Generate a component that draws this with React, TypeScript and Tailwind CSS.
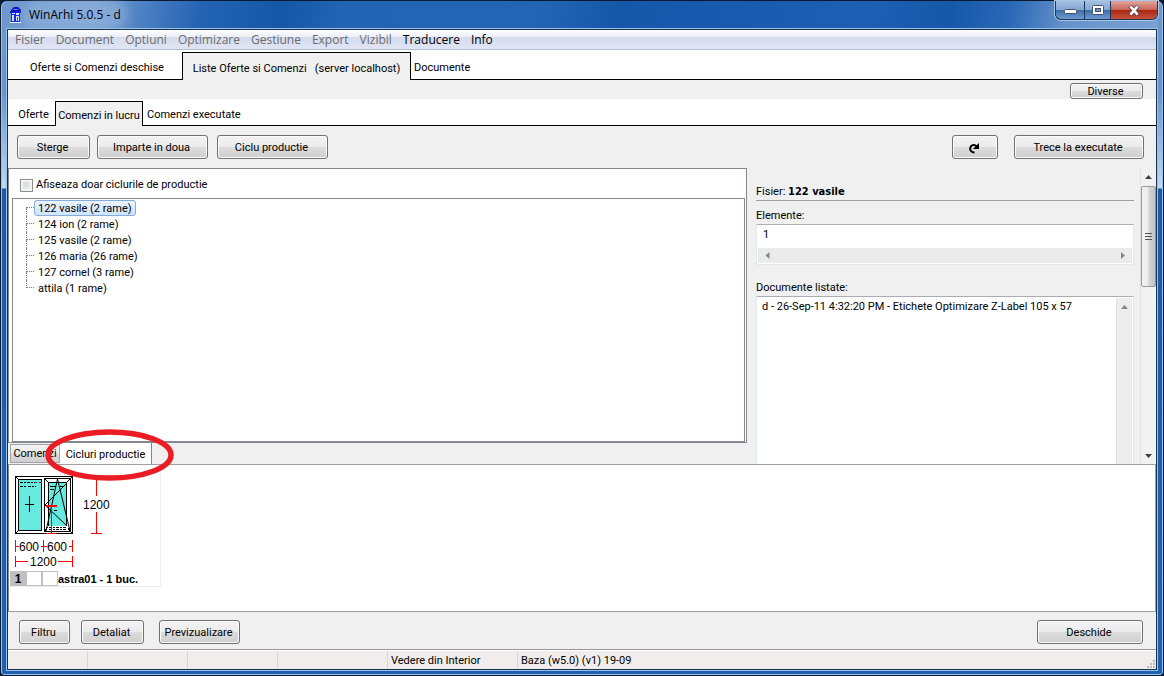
import { useState } from 'react';
import type { ReactNode } from 'react';
import clsx from 'clsx';

const menuItems = [
  { label: 'Fisier', enabled: false },
  { label: 'Document', enabled: false },
  { label: 'Optiuni', enabled: false },
  { label: 'Optimizare', enabled: false },
  { label: 'Gestiune', enabled: false },
  { label: 'Export', enabled: false },
  { label: 'Vizibil', enabled: false },
  { label: 'Traducere', enabled: true },
  { label: 'Info', enabled: true },
];

const orders = [
  '122 vasile (2 rame)',
  '124 ion (2 rame)',
  '125 vasile (2 rame)',
  '126 maria (26 rame)',
  '127 cornel (3 rame)',
  'attila (1 rame)',
];

const statusCells = [
  { text: '', width: 'w-20' },
  { text: '', width: 'w-[100px]' },
  { text: '', width: 'w-[90px]' },
  { text: '', width: 'w-[110px]' },
  { text: 'Vedere din Interior', width: 'w-[130px]' },
];

function WinButton({ className, label, children }: { className?: string; label?: string; children: ReactNode }) {
  return (
    <button
      type="button"
      aria-label={label}
      className={clsx(
        'flex shrink-0 items-center justify-center whitespace-nowrap rounded-[3px] border border-[#707070] bg-[linear-gradient(#f3f3f3,#ebebeb_48%,#dcdcdc_52%,#cfcfcf)] pr-[2px] pt-[2px] shadow-[inset_0_0_0_1px_#fbfbfb]',
        className,
      )}
    >
      {children}
    </button>
  );
}

function Tab({ active, className, children }: { active?: boolean; className?: string; children: ReactNode }) {
  return (
    <button
      type="button"
      role="tab"
      aria-selected={!!active}
      className={clsx(
        'flex shrink-0 items-center justify-center whitespace-pre pt-1',
        active && '-mb-px border border-b-0 border-black bg-[#f0f0f0]',
        className,
      )}
    >
      {children}
    </button>
  );
}

function Arrow({ dir, muted }: { dir: 'up' | 'down' | 'left' | 'right'; muted?: boolean }) {
  const points = {
    up: '0,6 3.5,2 7,6',
    down: '0,2 3.5,6 7,2',
    left: '5.5,0 1.5,3.5 5.5,7',
    right: '2,0 6,3.5 2,7',
  };
  return (
    <svg width="7" height="7" viewBox="0 0 7 7" aria-hidden="true">
      <polygon points={points[dir]} fill={muted ? '#868686' : '#404040'} />
    </svg>
  );
}

function AppIcon() {
  return (
    <svg width="12" height="16" viewBox="0 0 12 16" aria-hidden="true">
      <path d="M0 5L2 2L4 0h4l3 3v3H0z" fill="#0b12c8" />
      <path d="M3 3l1-1h3l1 1z" fill="#6f8cff" />
      <rect x="1" y="5" width="9" height="10" fill="#1526f0" />
      <path d="M2 6h3v1H2zM2 8h2v6H2zM6 6h3v2H6zM6 9h3v5H6z" fill="#dbe6ff" />
      <path d="M7 10h1v4H7z" fill="#3d55ff" />
      <path d="M0 15.5h11" stroke="#f4f8ff" />
    </svg>
  );
}

function TitleBar() {
  return (
    <header className="flex h-[27px] items-start bg-[linear-gradient(100deg,#6f98cd,#7ba2d4_8%,#4c80c2_12%,#2463b3_17%,#1557a7_24%,#2263b4_29%,#2464b5_46%,#1558aa_53%,#1d60b3_75%,#1558a9_82%,#2a68b6_87%,#6793cb_92%,#7ba1d3)] pl-1">
      <div className="flex h-full flex-1 items-center gap-[7px]">
        <AppIcon />
        <h1 className="rounded-full bg-[#8fb0dc]/60 font-['Open_Sans','Noto_Sans',sans-serif] text-xs text-black shadow-[0_0_8px_6px_rgba(143,176,220,0.6)]">
          WinArhi 5.0.5 - d
        </h1>
      </div>
      <div className="flex h-[19px] rounded-b-md border border-t-0 border-[#1d3557] shadow-[0_0_0_1px_#a9c5e8]">
        <button
          type="button"
          aria-label="Minimizare"
          className="flex w-7 items-end justify-center rounded-bl-md bg-[linear-gradient(#a5c0e2,#86a8d3_48%,#3d6dab_52%,#6f9bd0)] pb-1"
        >
          <svg width="13" height="6" viewBox="0 0 13 6" aria-hidden="true">
            <rect x="0.5" y="0.5" width="12" height="4" rx="1" fill="#fff" stroke="#47536a" />
          </svg>
        </button>
        <button
          type="button"
          aria-label="Maximizare"
          className="flex w-[27px] items-center justify-center border-x border-[#1d3557] bg-[linear-gradient(#a5c0e2,#86a8d3_48%,#3d6dab_52%,#6f9bd0)]"
        >
          <svg width="12" height="11" viewBox="0 0 12 11" aria-hidden="true">
            <rect x="0.5" y="0.5" width="11" height="9" rx="1" fill="#fff" stroke="#47536a" />
            <rect x="3.5" y="3.5" width="5" height="3" fill="#6c93c6" stroke="#47536a" />
          </svg>
        </button>
        <button
          type="button"
          aria-label="Inchidere"
          className="flex w-[46px] items-center justify-center rounded-br-md bg-[linear-gradient(#dfa59c,#c9675a_48%,#a92814_52%,#c9523c)]"
        >
          <svg width="12" height="11" viewBox="0 0 12 11" aria-hidden="true">
            <path d="M2 1l8 9M10 1l-8 9" stroke="#5b3f48" strokeWidth="4.4" />
            <path d="M2.4 1.4l7.2 8.2M9.6 1.4l-7.2 8.2" stroke="#fff" strokeWidth="2.6" />
          </svg>
        </button>
      </div>
    </header>
  );
}

function OrderTree() {
  const [selected, setSelected] = useState(orders[0]);

  return (
    <ul className="ml-[3px] mr-px flex-1 border border-[#828790] bg-white pl-[13px] pt-px">
      {orders.map((order, i) => (
        <li key={order} className="flex h-4 items-center">
          <span aria-hidden="true" className="flex h-full w-2 shrink-0 flex-col">
            <span className={clsx('h-2 border-b border-dotted border-[#808080]', i > 0 && 'border-l')} />
            <span className={clsx('h-2 border-dotted border-[#808080]', i < orders.length - 1 && 'border-l')} />
          </span>
          <button
            type="button"
            onClick={() => setSelected(order)}
            className={clsx(
              'flex h-4 items-center whitespace-nowrap rounded-[3px] border px-[3px] pt-px',
              order === selected
                ? 'border-[#84acdd] bg-[linear-gradient(#ebf4fe,#cfe4fe)]'
                : 'border-transparent',
            )}
          >
            {order}
          </button>
        </li>
      ))}
    </ul>
  );
}

function OrderPanel() {
  return (
    <div className="flex min-w-0 flex-1 flex-col">
      <div className="flex flex-1 flex-col border border-[#828790] bg-white">
        <label className="flex h-[29px] items-center gap-[3px] pl-[11px] pt-[3px]">
          <input
            type="checkbox"
            className="size-[13px] appearance-none border border-[#8e8f8f] bg-[linear-gradient(135deg,#cbcfd5,#f6f6f6)] shadow-[inset_0_0_0_2px_#f4f4f4]"
          />
          Afiseaza doar ciclurile de productie
        </label>
        <OrderTree />
      </div>
      <div role="tablist" className="flex h-[21px] pl-[2px]">
        <button
          type="button"
          role="tab"
          aria-selected={false}
          className="mt-px flex h-[19px] w-[50px] items-center justify-center border border-[#a0a3a8] bg-[linear-gradient(#f2f2f2,#ebebeb_48%,#dddddd_52%,#cfcfcf)]"
        >
          Comenzi
        </button>
        <button
          type="button"
          role="tab"
          aria-selected={true}
          className="relative flex h-[21px] w-[92px] items-center justify-center border-r border-[#828790] bg-white pt-[3px]"
        >
          Cicluri productie
          {/* marker drawn over the active tab */}
          <svg
            className="pointer-events-none absolute -left-4 -top-3.5 z-10 max-w-none"
            width="130"
            height="53"
            viewBox="0 0 130 53"
            aria-hidden="true"
          >
            <ellipse cx="65.5" cy="26" rx="61.5" ry="23" fill="none" stroke="#ec1c24" strokeWidth="5.5" />
          </svg>
        </button>
      </div>
    </div>
  );
}

function DetailPanel() {
  return (
    <aside className="flex w-[409px] shrink-0 gap-1.5 pl-[9px]">
      <div className="flex min-w-0 flex-1 flex-col">
        <p className="border-b border-[#a0a0a0] pt-4 leading-4">
          Fisier: <b className="font-['DejaVu_Sans_Condensed','Noto_Sans',sans-serif]">122 vasile</b>
        </p>
        <h2 className="mt-[7px] leading-4">Elemente:</h2>
        <div className="flex h-[41px] flex-col border border-[#e3e9ef] border-t-[#abadb3] bg-white p-px">
          <p className="flex-1 pl-[5px] leading-[18px]">1</p>
          <div className="flex h-[15px] items-center justify-between bg-[#ebebeb] px-1.5">
            <Arrow dir="left" muted />
            <Arrow dir="right" muted />
          </div>
        </div>
        <h2 className="mt-[15px] leading-4">Documente listate:</h2>
        <div className="flex flex-1 border border-b-0 border-[#e3e9ef] border-t-[#abadb3] bg-white pl-[5px]">
          <p className="min-w-0 flex-1 whitespace-nowrap pt-px leading-[18px]">
            d - 26-Sep-11 4:32:20 PM - Etichete Optimizare Z-Label 105 x 57
          </p>
          <div className="mr-px mt-px flex w-4 justify-center border-l border-[#e0e0e0] bg-[#ededed] pt-[5px]">
            <Arrow dir="up" muted />
          </div>
        </div>
      </div>
      <div className="flex w-4 flex-col items-center justify-between border-l border-[#e3e3e3] bg-[#f2f2f2] pb-[5px]">
        <div className="flex w-full flex-col items-center pt-[5px]">
          <Arrow dir="up" />
          <div className="mt-1.5 flex h-[101px] w-full flex-col items-center justify-center gap-[2px] rounded-[2px] border border-[#979797] bg-[linear-gradient(90deg,#f5f5f5,#e9e9eb_48%,#d6d6d9_52%,#c2c2c6)]">
            <span className="h-px w-[7px] bg-[#555]" />
            <span className="h-px w-[7px] bg-[#555]" />
            <span className="h-px w-[7px] bg-[#555]" />
          </div>
        </div>
        <Arrow dir="down" />
      </div>
    </aside>
  );
}

function WindowDrawing() {
  return (
    <svg
      width="150"
      height="105"
      viewBox="0 0 150 105"
      shapeRendering="crispEdges"
      className="block font-['Liberation_Sans',Arial,sans-serif]"
    >
      {/* frame */}
      <g fill="#fff" stroke="#000">
        <rect x="5.5" y="10.5" width="57" height="57" />
        <path d="M5 10l4 4M63 10l-4 4M5 68l4-4M63 68l-4-4" />
        <rect x="8.5" y="13.5" width="23" height="51" fill="#66eadf" />
        <rect x="34.5" y="12.5" width="26" height="53" />
        <rect x="38.5" y="16.5" width="18" height="44" fill="#66eadf" />
        <path d="M34 12l4 4M61 12l-4 4M34 66l4-5M61 66l-4-5" />
      </g>
      {/* opening marks */}
      <g fill="none" stroke="#000">
        <path d="M36 65L47.5 13L60 65M57 17L35 39L57 60" shapeRendering="auto" />
        <path d="M15 38.5h9M19.5 30v16M44 44.5h3M40 20.5h6M40 23.5h4M49 20.5h4" />
      </g>
      <rect x="38" y="60" width="20" height="5" fill="#fff" />
      <g stroke="#000" strokeDasharray="3 1 2 1">
        <path d="M10 16.5h15M10 20.5h6M18 20.5h8" />
        <path d="M39 61.5h18M39 63.5h18" />
      </g>
      <path d="M25 16.5h2M29 16.5h3" stroke="#8a2020" />
      {/* dimensions */}
      <path d="M36 39h11v2h-5v26h4v1H36v-1h5V41h-5z" fill="#ff0000" />
      <g fill="none" stroke="#ff0000">
        <path d="M86.5 14v16M86.5 46v21M81 67.5h11" />
        <path d="M5.5 74v12M33.5 74v12M62.5 74v12M5 80.5h4M31 80.5h6M59 80.5h3" />
        <path d="M5.5 90v11M62.5 90v11M5 95.5h13M48 95.5h14" />
      </g>
      <g fontSize="12" fill="#000">
        <text x="73" y="43">1200</text>
        <text x="9" y="85">600</text>
        <text x="37" y="85">600</text>
        <text x="20" y="100">1200</text>
      </g>
    </svg>
  );
}

function Preview() {
  return (
    <section className="h-[148px] border border-[#a0a0a0] border-l-[#828790] bg-white pl-px pt-px">
      <div className="w-[151px] border-b border-r border-[#ededed]">
        <WindowDrawing />
        <div className="flex h-[15px] items-center font-['Liberation_Sans',Arial,sans-serif] font-bold">
          <span className="flex h-full w-4 items-center justify-center bg-[#c0c0c0] text-xs">1</span>
          <span className="h-full w-4 border border-[#c0c0c0]" />
          <span className="h-full w-4 border border-[#c0c0c0]" />
          <span>astra01 - 1 buc.</span>
        </div>
      </div>
    </section>
  );
}

export default function App() {
  return (
    <div className="flex min-h-screen flex-col bg-[#0a1c33] font-['Roboto','Noto_Sans',sans-serif] text-[11px] leading-4 text-black">
      <div className="flex flex-1 flex-col rounded-t-[7px] rounded-b-[4px] border border-[#0b1a2e] bg-[linear-gradient(#6f98cd,#6694cf_90px,#c3d6ec_187px,#195aab_188px,#1e60b2)] px-[5px] pb-1 shadow-[inset_0_0_0_1px_#9cc4ea]">
        <TitleBar />
        <div className="flex flex-1 flex-col border border-[#9cc4e8]">
          <div className="flex flex-1 flex-col border border-[#16304f] bg-[#f0f0f0]">
            <nav className="flex h-5 items-center gap-[11px] border-b border-[#b6bccc] bg-[linear-gradient(#ffffff,#eceff7_35%,#d4dbed_38%,#e1e6f6)] pl-[7px] font-['Open_Sans','Noto_Sans',sans-serif] text-xs">
              {menuItems.map((item) => (
                <button
                  key={item.label}
                  type="button"
                  disabled={!item.enabled}
                  className={item.enabled ? 'text-black' : 'text-[#6d6d6d]'}
                >
                  {item.label}
                </button>
              ))}
            </nav>

            <div role="tablist" className="flex h-[30px] border-b border-black bg-white pt-[2px]">
              <Tab className="w-[174px] pl-1">Oferte si Comenzi deschise</Tab>
              <Tab active className="w-[229px]">{'Liste Oferte si Comenzi   (server localhost)'}</Tab>
              <Tab className="pl-[3px]">Documente</Tab>
            </div>

            <div className="flex h-[19px] justify-end pr-[13px] pt-[3px]">
              <WinButton className="h-4 w-[73px]">Diverse</WinButton>
            </div>

            <div role="tablist" className="flex h-[27px] border-b border-black bg-white pt-[2px]">
              <Tab className="w-[47px] pl-1">Oferte</Tab>
              <Tab active className="w-[88px]">Comenzi in lucru</Tab>
              <Tab className="pl-1">Comenzi executate</Tab>
            </div>

            <div className="flex h-[42px] items-start pl-[9px] pr-3 pt-[9px]">
              <WinButton className="mr-[7px] h-6 w-[73px]">Sterge</WinButton>
              <WinButton className="mr-[9px] h-6 w-[111px]">Imparte in doua</WinButton>
              <WinButton className="h-6 w-[111px]">Ciclu productie</WinButton>
              <div className="flex-1" />
              <WinButton className="mr-4 h-6 w-[46px]" label="Reincarca">
                <svg width="12" height="12" viewBox="0 0 12 12" aria-hidden="true">
                  <path d="M6.5 10.5C3.5 10.5 1.8 8.5 2.2 6C2.7 3.2 6 1.8 8.6 4.2" fill="none" stroke="#000" strokeWidth="2" />
                  <path d="M11 1v6H5z" fill="#000" />
                </svg>
              </WinButton>
              <WinButton className="h-6 w-[130px]">Trece la executate</WinButton>
            </div>

            <main className="flex flex-1">
              <OrderPanel />
              <DetailPanel />
            </main>

            <Preview />

            <div className="flex h-[38px] items-start border-b border-[#989898] pl-[11px] pr-[13px] pt-2">
              <WinButton className="mr-[11px] h-6 w-[51px]">Filtru</WinButton>
              <WinButton className="mr-[15px] h-6 w-[63px]">Detaliat</WinButton>
              <WinButton className="h-6 w-[81px]">Previzualizare</WinButton>
              <div className="flex-1" />
              <WinButton className="h-6 w-[106px]">Deschide</WinButton>
            </div>

            <footer className="flex h-[19px] items-stretch border-t border-white bg-[#f1edec]">
              {statusCells.map((cell, i) => (
                <span key={i} className={clsx('shrink-0 border-r border-[#d7d7d7] pl-[3px] leading-5', cell.width)}>
                  {cell.text}
                </span>
              ))}
              <span className="flex-1 pl-[3px] leading-5">Baza (w5.0) (v1) 19-09</span>
              <svg width="10" height="10" viewBox="0 0 10 10" className="self-end" aria-hidden="true">
                <path
                  d="M7 1h2v2H7zM4 4h2v2H4zM7 4h2v2H7zM1 7h2v2H1zM4 7h2v2H4zM7 7h2v2H7z"
                  fill="#bdbaba"
                />
              </svg>
            </footer>
          </div>
        </div>
      </div>
    </div>
  );
}
